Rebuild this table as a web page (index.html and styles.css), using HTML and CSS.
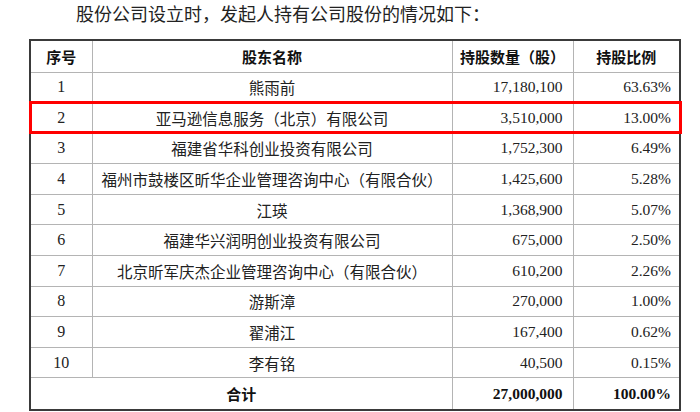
FILE: index.html
```html
<!DOCTYPE html>
<html lang="zh-CN">
<head>
<meta charset="utf-8">
<title>股东情况</title>
<link rel="stylesheet" href="styles.css">
</head>
<body>
<p class="intro">股份公司设立时，发起人持有公司股份的情况如下：</p>
<div class="wrap">
  <table class="holders">
    <colgroup>
      <col class="c-no">
      <col class="c-name">
      <col class="c-qty">
      <col class="c-pct">
    </colgroup>
    <thead>
      <tr><th>序号</th><th>股东名称</th><th>持股数量（股）</th><th>持股比例</th></tr>
    </thead>
    <tbody>
      <tr><td class="no">1</td><td class="name">熊雨前</td><td class="num qty">17,180,100</td><td class="num">63.63%</td></tr>
      <tr><td class="no">2</td><td class="name">亚马逊信息服务（北京）有限公司</td><td class="num qty">3,510,000</td><td class="num">13.00%</td></tr>
      <tr><td class="no">3</td><td class="name">福建省华科创业投资有限公司</td><td class="num qty">1,752,300</td><td class="num">6.49%</td></tr>
      <tr><td class="no">4</td><td class="name">福州市鼓楼区昕华企业管理咨询中心（有限合伙）</td><td class="num qty">1,425,600</td><td class="num">5.28%</td></tr>
      <tr><td class="no">5</td><td class="name">江瑛</td><td class="num qty">1,368,900</td><td class="num">5.07%</td></tr>
      <tr><td class="no">6</td><td class="name">福建华兴润明创业投资有限公司</td><td class="num qty">675,000</td><td class="num">2.50%</td></tr>
      <tr><td class="no">7</td><td class="name">北京昕军庆杰企业管理咨询中心（有限合伙）</td><td class="num qty">610,200</td><td class="num">2.26%</td></tr>
      <tr><td class="no">8</td><td class="name">游斯漳</td><td class="num qty">270,000</td><td class="num">1.00%</td></tr>
      <tr><td class="no">9</td><td class="name">翟浦江</td><td class="num qty">167,400</td><td class="num">0.62%</td></tr>
      <tr><td class="no">10</td><td class="name">李有铭</td><td class="num qty">40,500</td><td class="num">0.15%</td></tr>
    </tbody>
    <tfoot>
      <tr><th colspan="2">合计</th><td class="num qty strong">27,000,000</td><td class="num strong">100.00%</td></tr>
    </tfoot>
  </table>
  <div class="highlight"></div>
</div>
</body>
</html>
```
FILE: styles.css
```css
html, body {
  margin: 0;
  padding: 0;
  background: #ffffff;
}
body {
  font-family: "Liberation Serif", "Noto Sans CJK SC", serif;
  color: #222;
}
.intro {
  margin: 3px 0 0 0;
  padding-left: 76px;
  font-size: 18px;
  line-height: 24px;
  color: #222;
}
.wrap {
  position: relative;
  margin-top: 12px;
  padding-left: 29px;
}
.holders {
  border-collapse: collapse;
  table-layout: fixed;
  width: 652px;
  border: 2px solid #3a3a3a;
}
.c-no { width: 62px; }
.c-name { width: 360px; }
.c-qty { width: 121px; }
.c-pct { width: 107px; }
.holders th,
.holders td {
  border: 1px solid #b4b4b4;
  padding: 0;
  font-size: 15.5px;
  white-space: nowrap;
  overflow: hidden;
}
.holders th {
  font-family: "Noto Sans CJK SC", sans-serif;
  font-weight: 700;
  color: #111;
  text-align: center;
  font-size: 15px;
}
.holders thead tr { height: 32px; }
.holders tbody tr { height: 30.6px; }
.holders tfoot tr { height: 32px; }
.holders td.no {
  text-align: center;
  font-size: 16px;
}
.holders td.name { text-align: center; }
.holders td.num {
  text-align: right;
  padding-right: 8px;
}
.holders td.qty { padding-right: 10px; }
.holders td.strong {
  font-weight: 700;
  color: #111;
}
.highlight {
  position: absolute;
  left: 29px;
  top: 62px;
  width: 647px;
  height: 27px;
  border: 3px solid #ff0000;
}
```
